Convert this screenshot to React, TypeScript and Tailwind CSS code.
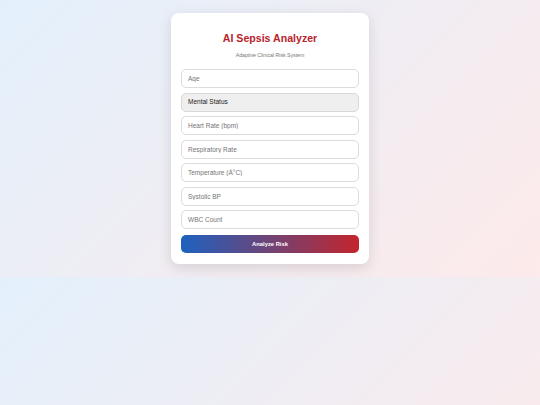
import React from "react";

const fields = [
  "Heart Rate (bpm)",
  "Respiratory Rate",
  "Temperature (Â°C)",
  "Systolic BP",
  "WBC Count",
];

export default function App() {
  return (
    <div
      className="h-screen overflow-hidden"
      style={{ fontFamily: '"Liberation Sans", Arial, sans-serif' }}
    >
      <div className="flex justify-center bg-[linear-gradient(135deg,#e3f0fc,#fdeaea)] pt-[13px] pb-[13px]">
        <div className="w-[198px] rounded-[8px] bg-white px-[10px] pt-[10px] pb-[11px] shadow-[0_4px_14px_rgba(0,0,0,0.12)]">
          <h2 className="mt-[8px] text-center text-[10.6px] leading-[14px] font-bold text-[#b8232b]">
            AI Sepsis Analyzer
          </h2>
          <p className="mt-[5px] text-center text-[5.2px] leading-[10px] text-[#777]">
            Adaptive Clinical Risk System
          </p>
          <div className="mt-[9px] flex flex-col gap-[4.5px]">
            <input
              placeholder="Age"
              className="h-[19px] w-full rounded-[5px] border border-[#dcdcdc] bg-white px-[6px] text-[6.5px] text-[#222] outline-none placeholder:text-[#757575]"
            />
            <div className="flex h-[19px] w-full items-center rounded-[5px] border border-[#d8d8d8] bg-[#efefef] px-[6px] text-[6.5px] text-[#222]">
              Mental Status
            </div>
            {fields.map((f) => (
              <input
                key={f}
                placeholder={f}
                className="h-[19px] w-full rounded-[5px] border border-[#dcdcdc] bg-white px-[6px] text-[6.5px] text-[#222] outline-none placeholder:text-[#757575]"
              />
            ))}
          </div>
          <button className="mt-[6px] h-[18px] w-full rounded-[5px] bg-[linear-gradient(90deg,#1d62c0,#c3252c)] text-[5.8px] font-bold text-white">
            Analyze Risk
          </button>
        </div>
      </div>
      {/* body background repeats below the content */}
      <div className="h-[277px] bg-[linear-gradient(135deg,#e3f0fc,#fdeaea)]" />
    </div>
  );
}
